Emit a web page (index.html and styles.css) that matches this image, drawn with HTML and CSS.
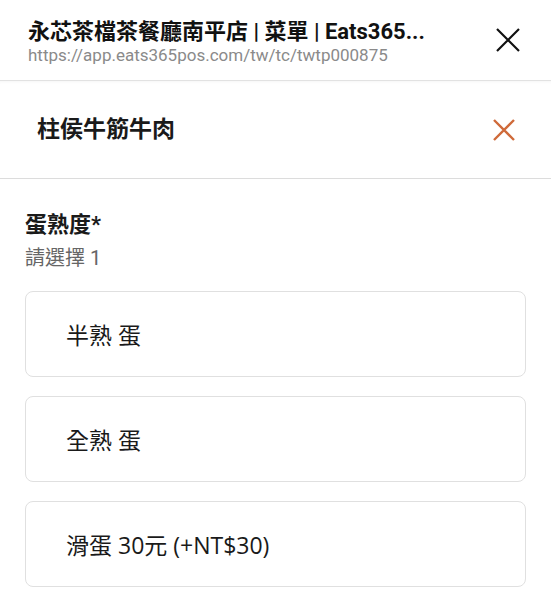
FILE: index.html
```html
<!DOCTYPE html>
<html lang="zh-Hant">
<head>
<meta charset="utf-8">
<title>菜單</title>
<link rel="stylesheet" href="styles.css">
</head>
<body>
<header class="topbar">
  <div class="topbar-text">
    <div class="page-title">永芯茶檔茶餐廳南平店 | 菜單 | Eats365...</div>
    <div class="page-url">https://app.eats365pos.com/tw/tc/twtp000875</div>
  </div>
  <svg class="close-black" width="24" height="24" viewBox="0 0 24 24"><path d="M1 1 L23 23 M23 1 L1 23" stroke="#111" stroke-width="2.2" fill="none"/></svg>
</header>
<div class="item-bar">
  <div class="item-title">柱侯牛筋牛肉</div>
  <svg class="close-orange" width="22" height="22" viewBox="0 0 22 22"><path d="M1 1 L21 21 M21 1 L1 21" stroke="#cf6a3a" stroke-width="2.4" fill="none"/></svg>
</div>
<main class="options">
  <div class="group-title">蛋熟度*</div>
  <div class="group-sub">請選擇 1</div>
  <div class="option-list">
    <div class="option">半熟 蛋</div>
    <div class="option">全熟 蛋</div>
    <div class="option">滑蛋 30元 (+NT$30)</div>
  </div>
</main>
</body>
</html>
```
FILE: styles.css
```css
html, body {
  margin: 0;
  padding: 0;
  background: #fff;
}
body {
  font-family: Roboto, "Noto Sans CJK TC", sans-serif;
  color: #1a1a1a;
  width: 551px;
  height: 600px;
  overflow: hidden;
}
.topbar {
  height: 81px;
  box-sizing: border-box;
  border-bottom: 1px solid #e2e2e2;
  display: flex;
  align-items: center;
  padding: 0 31px 0 28px;
  justify-content: space-between;
}
.topbar-text {
  display: flex;
  flex-direction: column;
  margin-top: 2px;
}
.page-title {
  font-size: 22px;
  font-weight: 700;
  line-height: 27px;
  color: #111;
  white-space: nowrap;
}
.page-url {
  font-size: 17px;
  line-height: 20px;
  color: #8a8a8a;
  white-space: nowrap;
}
.close-black {
  display: block;
}
.item-bar {
  height: 98px;
  box-sizing: border-box;
  border-bottom: 1px solid #dcdcdc;
  display: flex;
  align-items: center;
  justify-content: space-between;
  padding: 0 36px 0 37px;
  box-shadow: inset 0 4px 4px -4px rgba(0,0,0,0.06);
}
.item-title {
  font-size: 23px;
  font-weight: 700;
  color: #1a1a1a;
  line-height: 30px;
}
.close-orange {
  display: block;
}
.options {
  padding: 31px 25px 0 25px;
}
.group-title {
  font-size: 22px;
  font-weight: 700;
  line-height: 30px;
  color: #1a1a1a;
}
.group-sub {
  font-size: 20px;
  line-height: 26px;
  color: #666;
  margin-top: 5px;
}
.option-list {
  display: flex;
  flex-direction: column;
  gap: 19px;
  margin-top: 20px;
}
.option {
  height: 86px;
  box-sizing: border-box;
  border: 1px solid #e0e0e0;
  border-radius: 8px;
  display: flex;
  align-items: center;
  padding-left: 40px;
  font-size: 23px;
  color: #1a1a1a;
  font-family: "Open Sans", "Noto Sans CJK TC", sans-serif;
}
```
